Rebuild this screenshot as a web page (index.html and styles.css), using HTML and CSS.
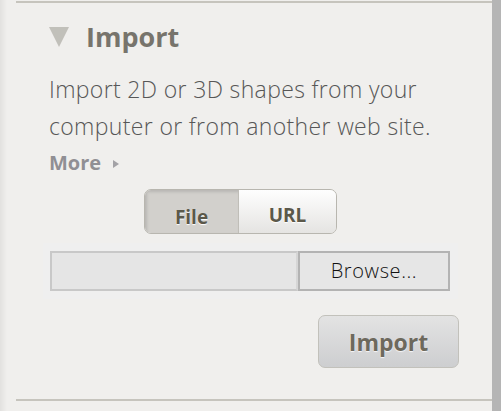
FILE: index.html
```html
<!DOCTYPE html>
<html>
<head>
<meta charset="utf-8">
<link rel="stylesheet" href="styles.css">
</head>
<body>
<div class="edge-left"></div>
<div class="main">
  <section class="section">
    <div class="heading">
      <span class="disclosure"></span>
      <h2 class="title">Import</h2>
    </div>
    <p class="desc">Import 2D or 3D shapes from your computer or from another web site.</p>
    <div class="more">More <span class="more-arrow"></span></div>
    <div class="toggle">
      <div class="seg seg-file">File</div>
      <div class="seg seg-url">URL</div>
    </div>
    <div class="file-box">
      <div class="file-field"></div>
      <div class="browse">Browse...</div>
    </div>
    <div class="actions">
      <div class="import-btn">Import</div>
    </div>
  </section>
</div>
<div class="scrollbar"></div>
</body>
</html>
```
FILE: styles.css
```css
html, body {
  margin: 0;
  padding: 0;
}
body {
  display: flex;
  width: 501px;
  height: 411px;
  overflow: hidden;
  background: #f0efed;
  font-family: "Open Sans", "DejaVu Sans", sans-serif;
}
.edge-left {
  width: 7px;
  flex: none;
  background: linear-gradient(to right, #e2e1df, #f0efed);
}
.main {
  flex: 1;
  padding: 1px 0 0 9px;
}
.scrollbar {
  width: 9px;
  flex: none;
  background: #b5b5b5;
}
.section {
  box-sizing: border-box;
  height: 400px;
  border-top: 2px solid #c6c4bd;
  border-bottom: 2px solid #c6c4bd;
  padding: 19px 0 0 33px;
}
.heading {
  display: flex;
  align-items: center;
  height: 30px;
}
.disclosure {
  width: 0;
  height: 0;
  border-left: 10px solid transparent;
  border-right: 10px solid transparent;
  border-top: 20px solid #c1c0ba;
  margin-right: 17px;
}
.title {
  margin: 0;
  font-size: 27px;
  line-height: 30px;
  font-weight: 700;
  color: #77746c;
}
.desc {
  margin: 19px 0 0 0;
  width: 420px;
  font-size: 23px;
  line-height: 37px;
  font-weight: 300;
  letter-spacing: 0.35px;
  color: #575757;
}
.more {
  margin-top: 3px;
  font-size: 20px;
  line-height: 30px;
  font-weight: 700;
  color: #908f94;
  display: flex;
  align-items: center;
}
.more-arrow {
  width: 0;
  height: 0;
  border-top: 4px solid transparent;
  border-bottom: 4px solid transparent;
  border-left: 6px solid #a3a2a6;
  margin-left: 12px;
  margin-top: 2px;
}
.toggle {
  display: flex;
  margin: 11px 0 0 95px;
  width: 193px;
  height: 45px;
  box-sizing: border-box;
  border: 1px solid #b8b6af;
  border-radius: 7px;
  overflow: hidden;
}
.seg {
  display: flex;
  justify-content: center;
  font-size: 19px;
  font-weight: 700;
  color: #5b584a;
  text-shadow: 0 1px 1px #ffffff;
}
.seg-file {
  width: 93px;
  background: #d2d0cc;
  box-shadow: inset 2px 2px 3px rgba(0,0,0,0.12);
  border-right: 1px solid #c0beb8;
  line-height: 55px;
}
.seg-url {
  flex: 1;
  background: linear-gradient(#fefefe, #e5e4e2);
  line-height: 51px;
}
.file-box {
  display: flex;
  margin: 9px 0 0 -6px;
  width: 415px;
  box-sizing: border-box;
  padding: 8px 8px 8px 7px;
  background: #efefef;
}
.file-field {
  width: 248px;
  height: 40px;
  box-sizing: border-box;
  border: 2px solid #c8c8c8;
  border-right-color: #d6d6d6;
  background: #e5e5e5;
}
.browse {
  width: 152px;
  height: 40px;
  box-sizing: border-box;
  border: 2px solid #b3b3b3;
  background: #e6e6e6;
  font-size: 20px;
  line-height: 36px;
  font-weight: 300;
  letter-spacing: 0.6px;
  text-align: center;
  color: #111111;
}
.actions {
  margin: 16px 0 0 269px;
}
.import-btn {
  width: 141px;
  height: 53px;
  box-sizing: border-box;
  border: 1px solid #c2c1bb;
  border-radius: 7px;
  background: linear-gradient(#e3e3e3, #cdced0);
  text-align: center;
  font-size: 23px;
  line-height: 53px;
  font-weight: 700;
  color: #6d695d;
  text-shadow: 0 1px 1px rgba(255,255,255,0.8);
}
```
